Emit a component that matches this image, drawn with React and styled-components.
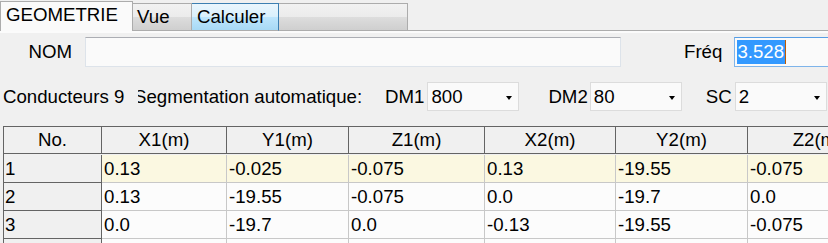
import React from 'react'
import styled, { createGlobalStyle } from 'styled-components'

const GlobalStyle = createGlobalStyle`
  html, body {
    margin: 0;
    padding: 0;
    background: #f0f0f0;
    overflow: hidden;
  }
  body {
    width: 828px;
    height: 243px;
    font-family: "Liberation Sans", Arial, sans-serif;
    font-size: 18.67px;
    color: #000;
  }
`

const Window = styled.div`
  width: 828px;
  height: 243px;
  overflow: hidden;
  background: #f0f0f0;
`

/* tabs */
const TabStrip = styled.div`
  display: flex;
  align-items: flex-end;
  height: 31px;
`

const Tab = styled.div`
  box-sizing: border-box;
  height: ${p => (p.$active ? '30px' : '28px')};
  width: ${p => p.$w}px;
  padding-left: ${p => p.$pad || 4}px;
  display: flex;
  align-items: center;
  line-height: 1;
  white-space: nowrap;
  border: 1px solid ${p => (p.$hover ? '#3c7fb1' : '#acacac')};
  border-left: ${p => (p.$noLeft ? 'none' : undefined)};
  border-bottom: ${p => (p.$active ? 'none' : '1px solid #acacac')};
  background: ${p =>
    p.$active
      ? '#fafafa'
      : p.$hover
      ? 'linear-gradient(#eaf6fd, #d9f0fc 50%, #bee6fd 50%, #a7d9f5)'
      : 'linear-gradient(#f2f2f2, #ebebeb 50%, #dddddd 50%, #cfcfcf)'};
  padding-bottom: ${p => (p.$active ? '2px' : '0')};
`

const TabFill = styled.div`
  flex: 1;
  height: 1px;
  background: #acacac;
`

const Panel = styled.div`
  border-top: 2px solid #fbfbfb;
  padding-top: 4px;
`

/* form rows */
const Row = styled.div`
  display: flex;
  align-items: center;
  height: ${p => p.$h}px;
  margin-top: ${p => p.$mt || 0}px;
  padding-left: ${p => p.$pl || 0}px;
  white-space: nowrap;
`

const Label = styled.span`
  display: inline-block;
  width: ${p => (p.$w ? `${p.$w}px` : 'auto')};
  text-align: ${p => p.$align || 'left'};
  margin-left: ${p => p.$ml || 0}px;
  margin-right: ${p => p.$mr || 0}px;
  flex-shrink: 0;
`

const ClipLabel = styled.span`
  display: inline-block;
  overflow: hidden;
  width: ${p => p.$w}px;
  margin-left: ${p => p.$ml}px;
  flex-shrink: 0;
  span {
    display: inline-block;
    margin-left: -4px;
  }
`

const TextBox = styled.div`
  box-sizing: border-box;
  height: 30px;
  width: ${p => p.$w}px;
  flex-shrink: 0;
  background: #fafafa;
  border: 1px solid ${p => (p.$focus ? '#7eb4ea' : '#dde3ea')};
  border-top-color: ${p => (p.$focus ? '#569de5' : '#abadb3')};
  display: flex;
  align-items: center;
  padding-left: 2px;
`

const Selected = styled.span`
  background: #3399ff;
  color: #fff;
  line-height: 24px;
  padding-right: 1px;
  border-right: 1px solid #c05a00;
`

const Combo = styled.div`
  box-sizing: border-box;
  height: 29px;
  width: 92px;
  flex-shrink: 0;
  background: #fafafa;
  border: 1px solid #dcdcdc;
  display: flex;
  align-items: center;
  justify-content: space-between;
  padding: 0 6px 0 3px;
`

const Arrow = styled.span`
  width: 0;
  height: 0;
  border-left: 3.5px solid transparent;
  border-right: 3.5px solid transparent;
  border-top: 4px solid #000;
  margin-top: 2px;
`

/* grid */
const Grid = styled.div`
  display: grid;
  grid-template-columns: 98px 125px 122px 136px 131px 132px 140px;
  grid-auto-rows: 28px;
  margin-top: 15px;
  margin-left: 3px;
  border-left: 1px solid #646464;
  border-top: 1px solid #646464;
  width: max-content;
`

const HeadCell = styled.div`
  box-sizing: border-box;
  height: 27px;
  background: #f0f0f0;
  border-right: 1px solid #646464;
  border-bottom: 1px solid #646464;
  display: flex;
  align-items: center;
  justify-content: center;
  white-space: nowrap;
  overflow: hidden;
  padding-bottom: 1px;
`

const RowHead = styled.div`
  box-sizing: border-box;
  background: #f0f0f0;
  border-right: 1px solid #646464;
  border-bottom: 1px solid #646464;
  display: flex;
  align-items: center;
  padding-left: 1px;
`

const Cell = styled.div`
  box-sizing: border-box;
  background: ${p => (p.$hl ? '#fbf8e1' : '#fcfcfc')};
  border-right: 1px solid #c8c8c8;
  border-bottom: 1px solid #c8c8c8;
  display: flex;
  align-items: center;
  padding-left: 2px;
  white-space: nowrap;
  overflow: hidden;
`

const headers = ['No.', 'X1(m)', 'Y1(m)', 'Z1(m)', 'X2(m)', 'Y2(m)', 'Z2(m)']

const rows = [
  ['1', '0.13', '-0.025', '-0.075', '0.13', '-19.55', '-0.075'],
  ['2', '0.13', '-19.55', '-0.075', '0.0', '-19.7', '0.0'],
  ['3', '0.0', '-19.7', '0.0', '-0.13', '-19.55', '-0.075'],
  ['', '', '', '', '', '', ''],
]

export default function App() {
  return (
    <Window>
      <GlobalStyle />
      <TabStrip>
        <Tab $active $w={133} $pad={5}>GEOMETRIE</Tab>
        <Tab $w={59} $noLeft $pad={4}>Vue</Tab>
        <Tab $w={87} $hover $noLeft $pad={5}>Calculer</Tab>
        <Tab $w={129} $noLeft />
        <TabFill />
      </TabStrip>
      <Panel>
        <Row $h={30}>
          <Label $w={72} $align="right" $mr={13}>NOM</Label>
          <TextBox $w={536} />
          <Label $ml={63} $mr={12}>Fréq</Label>
          <TextBox $w={110} $focus>
            <Selected>3.528</Selected>
          </TextBox>
        </Row>
        <Row $h={29} $mt={15} $pl={3}>
          <Label $w={122}>Conducteurs 9</Label>
          <ClipLabel $w={224} $ml={13}>
            <span>Segmentation automatique:</span>
          </ClipLabel>
          <Label $ml={23} $mr={3}>DM1</Label>
          <Combo>800<Arrow /></Combo>
          <Label $ml={29} $mr={2}>DM2</Label>
          <Combo>80<Arrow /></Combo>
          <Label $ml={24} $mr={3}>SC</Label>
          <Combo>2<Arrow /></Combo>
        </Row>
        <Grid>
          {headers.map(h => (
            <HeadCell key={h}>{h}</HeadCell>
          ))}
          {rows.map((r, i) =>
            r.map((v, j) =>
              j === 0 ? (
                <RowHead key={`${i}-${j}`}>{v}</RowHead>
              ) : (
                <Cell key={`${i}-${j}`} $hl={i === 0}>{v}</Cell>
              )
            )
          )}
        </Grid>
      </Panel>
    </Window>
  )
}
